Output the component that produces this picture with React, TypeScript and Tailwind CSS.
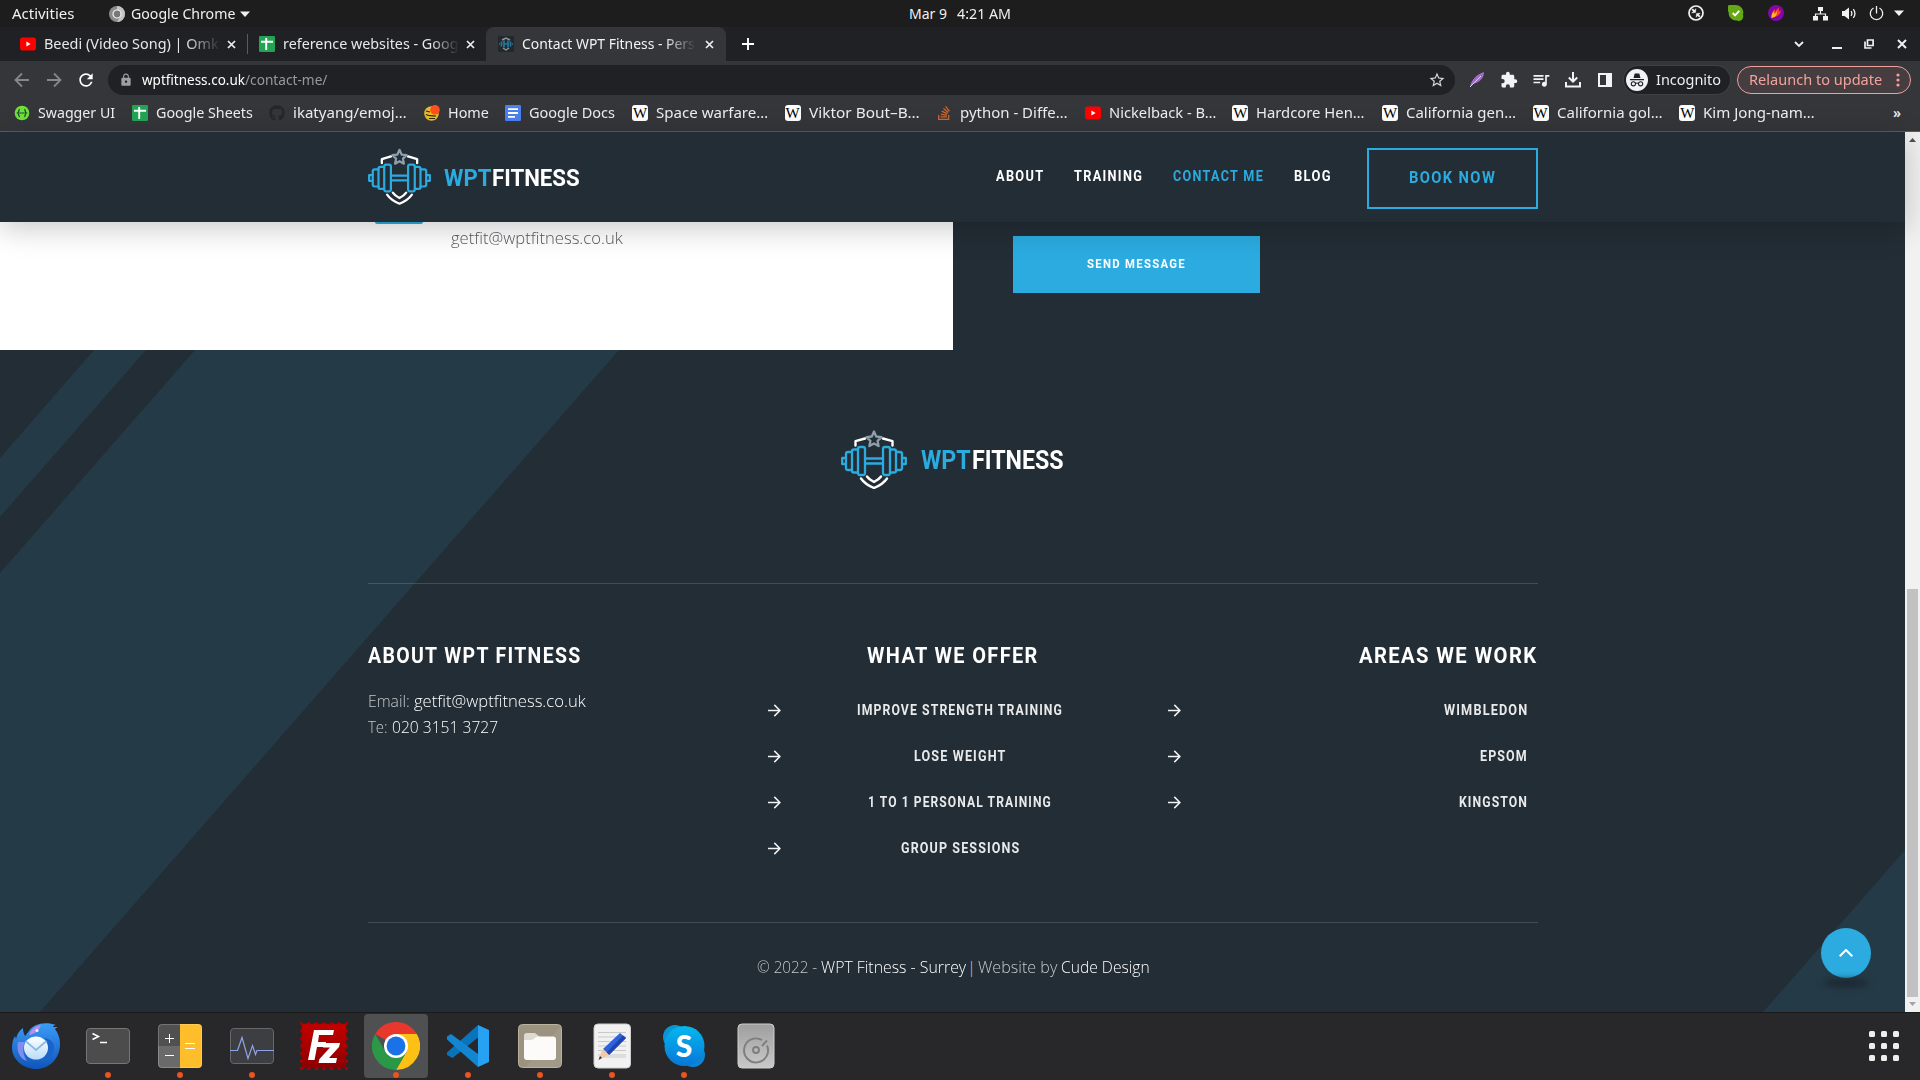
import { useLayoutEffect, useRef, type ReactNode } from "react";
import { FaGithub, FaStackOverflow } from "react-icons/fa";
import { MdStarBorder, MdExtension, MdQueueMusic, MdLock, MdRefresh } from "react-icons/md";

/** Single line of text condensed or widened to fill the width given in its classes. */
function Fit({ className = "", children }: { className?: string; children: ReactNode }) {
  const outer = useRef<HTMLSpanElement>(null);
  const inner = useRef<HTMLSpanElement>(null);
  useLayoutEffect(() => {
    if (!outer.current || !inner.current) return;
    const spacing = parseFloat(getComputedStyle(inner.current).letterSpacing) || 0;
    const natural = inner.current.offsetWidth - spacing;
    inner.current.style.transform = `scaleX(${outer.current.offsetWidth / natural})`;
  }, []);
  return (
    <span ref={outer} className={`inline-block shrink-0 text-left whitespace-nowrap ${className}`}>
      <span ref={inner} className="inline-block origin-left">
        {children}
      </span>
    </span>
  );
}

/* ---------- small favicons ---------- */
const YouTube = () => (
  <svg className="size-4 shrink-0" viewBox="0 0 16 16">
    <rect y="1.5" width="16" height="13" rx="2.8" fill="#f00" />
    <path d="M6.4 5.6v4.8L10.6 8z" fill="#fff" />
  </svg>
);
const Sheets = () => (
  <svg className="size-4 shrink-0" viewBox="0 0 16 16">
    <rect width="16" height="16" rx="1.2" fill="#23a455" />
    <path d="M2 5.7h12M7.2 2v12" stroke="#fff" strokeWidth="1.9" />
  </svg>
);
const Docs = () => (
  <svg className="size-4 shrink-0" viewBox="0 0 16 16">
    <rect width="16" height="16" rx="1.2" fill="#4a80f0" />
    <path d="M3 4.2h10M3 8h10M3 11.8h7" stroke="#fff" strokeWidth="1.8" />
  </svg>
);
const Swagger = () => (
  <svg className="size-4 shrink-0" viewBox="0 0 16 16">
    <circle cx="8" cy="8" r="7.3" fill="#6fe23a" />
    <path d="M5.8 4.3c-1.6 0-.4 2.8-2.2 3.7 1.8.9.6 3.7 2.2 3.7M10.2 4.3c1.6 0 .4 2.8 2.2 3.7-1.8.9-.6 3.7-2.2 3.7" fill="none" stroke="#1d4630" strokeWidth="1.3" />
    <path d="M5.5 8h5" stroke="#1d4630" strokeWidth="1.4" strokeDasharray="1.2 .7" />
  </svg>
);
const HomeFav = () => (
  <svg className="size-4 shrink-0" viewBox="0 0 16 16">
    <circle cx="7.5" cy="8.5" r="7.3" fill="#e9bd25" />
    <path d="M2 6l4 1M2 9.500c3 2 7 1 10 1.500M5 13.500h6" fill="none" stroke="#2b2412" strokeWidth="1.2" />
    <circle cx="11" cy="4.8" r="4.800" fill="#ff5020" />
  </svg>
);
const Wiki = () => (
  <span className="flex size-4 shrink-0 items-center justify-center rounded-[3px] bg-white font-['Liberation_Serif',serif] text-[15px] leading-4 text-black">
    <Fit className="w-[14px]">W</Fit>
  </span>
);
const WptFav = () => (
  <span className="flex size-4 shrink-0 items-center justify-center bg-[#22282c]">
    <svg className="size-4" viewBox="0 0 16 16" fill="none">
      <path d="M4 4l4-2 4 2M5 12l3 2 3-2" stroke="#8d989e" strokeWidth="1.4" />
      <path d="M1 8h1M14 8h1M3.5 5.5v5M12.5 5.5v5M6 4.5v7M10 4.5v7M6 8h4" stroke="#23799e" strokeWidth="1.7" />
    </svg>
  </span>
);

/* ---------- desktop top bar ---------- */
function TopBar() {
  return (
    <div className="grid h-[27px] grid-cols-3 bg-[#1d1d1d] text-[14px] leading-[27px] text-[#f0f0f0]">
      <div className="flex items-center pl-3">
        <Fit className="w-[62px]">Activities</Fit>
        <svg className="ml-[35px] size-4" viewBox="0 0 16 16">
          <circle cx="8" cy="8" r="8" fill="#8c8c8c" />
          <path d="M8 0a8 8 0 0 1 8 8 8 8 0 0 1-8 8l3.5-6L8 4.5z" fill="#c4c4c4" />
          <circle cx="8" cy="8" r="4" fill="#777" stroke="#f2f2f2" strokeWidth="1.2" />
        </svg>
        <Fit className="ml-1.5 w-[104px]">Google Chrome</Fit>
        <svg className="ml-[5px] h-[6px] w-[10px]" viewBox="0 0 10 6"><path d="M0 .5h10L5 6z" fill="#f0f0f0" /></svg>
      </div>
      <div className="flex items-center justify-center gap-[10px]">
        <Fit className="w-[38px]">Mar 9</Fit>
        <Fit className="w-[54px]">4:21 AM</Fit>
      </div>
      <div className="flex items-center justify-end pr-4 pb-px">
        <svg className="size-4" viewBox="0 0 16 16" fill="none" stroke="#f2f2f2">
          <circle cx="8" cy="8" r="7" strokeWidth="1.7" />
          <path d="M4.200 4.200l2.600 2.600M11.800 11.800L9.200 9.200" strokeWidth="1.8" />
          <path d="M3.600 8l4-.4.4-4zM12.400 8l-4 .4-.4 4z" fill="#f2f2f2" strokeWidth=".3" />
        </svg>
        <svg className="ml-6 size-4" viewBox="0 0 16 16">
          <path d="M1 0h7a7.5 7.5 0 0 1 7 9.5c1 3-.5 6.5-4 6.5-1 0-1.5-.3-2-.5A7.5 7.5 0 0 1 .7 7 4.5 4.5 0 0 1 1 0z" fill="#64a813" />
          <path d="M4.700 8l2.300 2.400L11.300 5.800" fill="none" stroke="#fff" strokeWidth="1.900" />
        </svg>
        <svg className="ml-6 size-4" viewBox="0 0 16 16">
          <circle cx="8" cy="8" r="8" fill="#8008a8" />
          <path d="M3.500 13c-.5-4 1-7 3.500-9 0 2 0 2 .5 3 .5-2 2-4 3.500-4.500-.5 2 0 3 .2 4l1.600-1.200c0 5-4 6.500-9.300 7.700z" fill="#fb3b3b" />
          <path d="M3.500 13c0-3 .5-5 2.500-6.500 0 2 .5 2 1 2.500l2-3c0 5-2 6-5.500 7z" fill="#ffc21c" />
        </svg>
        <svg className="ml-[29px] size-[15px]" viewBox="0 0 15 15" fill="#f2f2f2">
          <path d="M5 1h5v4H5zM0 10h5v4.500H0zM10 10h5v4.500h-5z" />
          <path d="M7.500 4v4M2.500 11V8h10v3" fill="none" stroke="#f2f2f2" strokeWidth="1.200" />
        </svg>
        <svg className="ml-[14px] size-[15px]" viewBox="0 0 15 15">
          <path d="M0 5h2.500L7 1.500v12L2.500 10H0z" fill="#f2f2f2" />
          <path d="M9 5.200c1 1.300 1 3.300 0 4.600M11.300 3.200c2 2.600 2 6 0 8.600" fill="none" stroke="#f2f2f2" strokeWidth="1.300" />
        </svg>
        <svg className="ml-3 size-[15px]" viewBox="0 0 15 15" fill="none" stroke="#f2f2f2" strokeWidth="1.300">
          <path d="M4.500 2a6.200 6.200 0 1 0 6 0M7.500 0v7.500" />
        </svg>
        <svg className="ml-[10px] h-[6px] w-[10px]" viewBox="0 0 10 6"><path d="M0 .5h10L5 6z" fill="#f2f2f2" /></svg>
      </div>
    </div>
  );
}

/* ---------- browser chrome ---------- */
const Close = () => (
  <svg className="size-[9px] shrink-0" viewBox="0 0 9 9"><path d="M1 1l7 7M8 1L1 8" stroke="#eee" strokeWidth="1.700" /></svg>
);

function TabStrip() {
  return (
    <div className="flex h-[34px] items-stretch bg-[#202124] text-[14px] leading-[34px] text-[#e6e7e9]">
      <div className="flex w-[247px] items-center pl-5">
        <YouTube />
        <span className="ml-2 w-[177px] whitespace-nowrap [mask-image:linear-gradient(to_right,black_80%,transparent)]">
          <Fit className="w-[175px]">Beedi (Video Song) | Omk</Fit>
        </span>
        <span className="ml-[6px] flex"><Close /></span>
      </div>
      <div className="my-[7px] w-px bg-[#5a5b5f]" />
      <div className="flex w-[238px] items-center pl-[11px]">
        <Sheets />
        <span className="ml-2 w-[176px] whitespace-nowrap [mask-image:linear-gradient(to_right,black_84%,transparent)]">
          <Fit className="w-[175px]">reference websites - Goog</Fit>
        </span>
        <span className="ml-[7px] flex"><Close /></span>
      </div>
      <div className="flex w-[240px] items-center rounded-t-lg bg-[#35363a] pl-3 text-[#f1f2f4]">
        <WptFav />
        <span className="ml-2 w-[174px] whitespace-nowrap [mask-image:linear-gradient(to_right,black_82%,transparent)]">
          <Fit className="w-[173px]">Contact WPT Fitness - Pers</Fit>
        </span>
        <span className="ml-[9px] flex"><Close /></span>
      </div>
      <div className="flex flex-1 items-center rounded-bl-lg pl-4">
        <svg className="size-3" viewBox="0 0 12 12"><path d="M6 0v12M0 6h12" stroke="#fff" strokeWidth="1.900" /></svg>
        <div className="ml-auto flex items-center pr-[13px]">
          <svg className="h-[7px] w-[10px]" viewBox="0 0 10 7"><path d="M1 1l4 4 4-4" fill="none" stroke="#f0f0f0" strokeWidth="1.800" /></svg>
          <svg className="ml-[28px] size-[10px]" viewBox="0 0 10 10"><path d="M0 9h10" stroke="#f0f0f0" strokeWidth="2" /></svg>
          <svg className="ml-[22px] size-[10px]" viewBox="0 0 10 10" fill="none" stroke="#f0f0f0" strokeWidth="1.700"><path d="M3.500 1h5.600v5.500H3.500zM1 2.500V9h6.500" /></svg>
          <svg className="ml-[23px] size-[10px]" viewBox="0 0 10 10"><path d="M1 1l8 8M9 1L1 9" stroke="#f0f0f0" strokeWidth="2" /></svg>
        </div>
      </div>
    </div>
  );
}

function Toolbar() {
  return (
    <div className="flex h-[38px] items-center bg-[#35363a] pl-[14px] text-[14px] leading-[30px]">
      <svg className="size-4" viewBox="0 0 16 16" fill="none" stroke="#85878a" strokeWidth="1.800"><path d="M15 8H2M8 1.500L1.500 8 8 14.500" /></svg>
      <svg className="ml-4 size-4" viewBox="0 0 16 16" fill="none" stroke="#85878a" strokeWidth="1.800"><path d="M1 8h13M8 1.500L14.500 8 8 14.500" /></svg>
      <MdRefresh className="ml-[14px] size-5 text-white" />
      <div className="ml-3 flex h-[30px] w-[1347px] items-center rounded-full bg-[#202124] pl-[11px]">
        <MdLock className="size-[14px] text-[#9aa0a6]" />
        <Fit className="ml-[9px] w-[103px] text-white">wptfitness.co.uk</Fit>
        <Fit className="w-[82px] text-[#96999d]">/contact-me/</Fit>
        <MdStarBorder className="mr-[9px] ml-auto size-[18px] text-[#d5d7da]" />
      </div>
      <svg className="ml-[14px] size-4" viewBox="0 0 16 16"><path d="M1 15C2 8 8 2 15 0c0 6-4 10-11 12z" fill="#a36bd0" /><path d="M1 15L12 4" stroke="#e3c6f5" strokeWidth="1" /></svg>
      <MdExtension className="ml-[15px] size-[18px] text-[#f1f3f4]" />
      <MdQueueMusic className="ml-[13px] size-5 text-[#f1f3f4]" />
      <svg className="ml-[14px] size-4" viewBox="0 0 16 16" fill="none" stroke="#f1f3f4" strokeWidth="2"><path d="M8 0v9M3.800 5.500L8 9.700l4.200-4.200M1 10v4.500h14V10" /></svg>
      <svg className="ml-[17px] h-[14px] w-[14px]" viewBox="0 0 14 14"><path d="M0 0h14v14H0zM2 2v10h6V2z" fill="#f1f3f4" fillRule="evenodd" /></svg>
      <div className="ml-3 flex h-7 w-[106px] items-center rounded-full bg-[#202124] pl-[2px] text-[#eceded] ring-1 ring-[#3f4044]">
        <svg className="size-[22px]" viewBox="0 0 22 22">
          <circle cx="11" cy="11" r="11" fill="#f1f3f4" />
          <path d="M7.500 9l1.200-4.500h4.600L14.500 9zM4 10h14v1.300H4z" fill="#202124" />
          <path d="M5.300 14.800a2.100 2.100 0 1 0 4.200 0 2.100 2.100 0 1 0-4.200 0M12.500 14.800a2.100 2.100 0 1 0 4.200 0 2.100 2.100 0 1 0-4.200 0M9.500 14.500q1.500-1 3 0" fill="none" stroke="#202124" strokeWidth="1.100" />
        </svg>
        <Fit className="ml-2 w-[65px]">Incognito</Fit>
      </div>
      <div className="ml-[7px] flex h-7 w-[174px] items-center rounded-full border border-[#f0a09b] bg-[#463d41] pl-[11px] text-[#f0a39e]">
        <Fit className="w-[133px]">Relaunch to update</Fit>
        <svg className="ml-[14px] h-[14px] w-[4px]" viewBox="0 0 4 14" fill="#f0a39e"><circle cx="2" cy="2" r="1.600" /><circle cx="2" cy="7" r="1.600" /><circle cx="2" cy="12" r="1.600" /></svg>
      </div>
    </div>
  );
}

const bookmarks: { icon: ReactNode; label: string; width: string }[] = [
  { icon: <Swagger />, label: "Swagger UI", width: "w-[77px]" },
  { icon: <Sheets />, label: "Google Sheets", width: "w-[97px]" },
  { icon: <FaGithub className="size-4 text-[#23272c]" />, label: "ikatyang/emoj…", width: "w-[114px]" },
  { icon: <HomeFav />, label: "Home", width: "w-[41px]" },
  { icon: <Docs />, label: "Google Docs", width: "w-[86px]" },
  { icon: <Wiki />, label: "Space warfare…", width: "w-[112px]" },
  { icon: <Wiki />, label: "Viktor Bout–B…", width: "w-[111px]" },
  { icon: <FaStackOverflow className="size-4 text-[#d4672b]" />, label: "python - Diffe…", width: "w-[108px]" },
  { icon: <YouTube />, label: "Nickelback - B…", width: "w-[107px]" },
  { icon: <Wiki />, label: "Hardcore Hen…", width: "w-[109px]" },
  { icon: <Wiki />, label: "California gen…", width: "w-[110px]" },
  { icon: <Wiki />, label: "California gol…", width: "w-[106px]" },
  { icon: <Wiki />, label: "Kim Jong-nam…", width: "w-[112px]" },
];

function BookmarksBar() {
  return (
    <div className="flex h-[33px] items-center gap-[16.600px] border-b border-[#5c5d61] bg-[#35363a] pb-[5px] pl-[14px] text-[14px] leading-7 text-[#eceded]">
      {bookmarks.map((b) => (
        <div key={b.label} className="flex shrink-0 items-center gap-2">
          {b.icon}
          <Fit className={b.width}>{b.label}</Fit>
        </div>
      ))}
      <span className="mr-[19px] ml-auto font-semibold">»</span>
    </div>
  );
}

/* ---------- website ---------- */
function LogoMark({ className }: { className: string }) {
  return (
    <svg className={className} viewBox="0 0 66 59" fill="none" strokeLinejoin="round" strokeLinecap="round">
      <g stroke="#fff" strokeWidth="2.400">
        <path d="M14.500 15.500v-4.300L24 8.500M51.500 15.500v-4.300L42 8.500" />
        <path d="M26 46.500c2 3 4.500 4.300 7 5.500 2.500-1.200 5-2.500 7-5.500M20 48.500c3.500 5 8 7.500 13 9.500 5-2 9.500-4.500 13-9.500" />
      </g>
      <path d="M33 1.500l2.200 5 5.300.6-3.900 3.700 1 5.300L33 13.500l-4.600 2.600 1-5.300-3.900-3.700 5.300-.6z" stroke="#8e9fab" strokeWidth="2.300" />
      <g stroke="#2babe0" strokeWidth="2.300">
        <rect x="17" y="17" width="7" height="28" rx="2" />
        <rect x="42" y="17" width="7" height="28" rx="2" />
        <path d="M17 19.500h-4Q11 19.500 11 21v20q0 1.500 2 1.500h4M49 19.500h4q2 0 2 1.500v20q0 1.500-2 1.500h-4" />
        <path d="M11 22H7q-2 0-2 2v14q0 2 2 2h4M55 22h4q2 0 2 2v14q0 2-2 2h-4" />
        <path d="M5 28H1.200v6H5M61 28h3.800v6H61M24 28.500h18M24 33.500h18" />
      </g>
    </svg>
  );
}

function SiteHeader() {
  return (
    <header className="relative z-10 flex h-[90px] items-center bg-[#232d35] pl-[368px] font-['Roboto',sans-serif] font-bold text-white shadow-[0_6px_30px_rgba(0,0,0,0.22)]">
      <LogoMark className="mb-[2px] h-[57px] w-[63px]" />
      <div className="ml-[13px] flex gap-px pt-[1px] text-[24.500px] leading-8">
        <Fit className="w-[47px] text-[#2babe0]">WPT</Fit>
        <Fit className="w-[88px]">FITNESS</Fit>
      </div>
      <nav className="ml-[416px] flex gap-[31px] text-[14.500px] leading-6 tracking-[1.500px]">
        <Fit className="w-[47px]">ABOUT</Fit>
        <Fit className="w-[68px]">TRAINING</Fit>
        <Fit className="w-[90px] text-[#2babe0]">CONTACT ME</Fit>
        <Fit className="w-[37px]">BLOG</Fit>
      </nav>
      <button className="mt-[2px] ml-9 flex h-[61px] w-[171px] items-center justify-center border-2 border-[#2babe0] pr-[2px] text-[16px] leading-6 tracking-[1.500px] text-[#2babe0]">
        <Fit className="w-[86px]">BOOK NOW</Fit>
      </button>
    </header>
  );
}

function ContactStrip() {
  return (
    <section className="flex h-[128px]">
      <div className="w-[953px] bg-white">
        <div className="flex pl-[375px]">
          <div className="h-[2px] w-12 rounded-b-sm bg-[#2babe0]" />
          <div className="ml-7 pt-[3px] font-['Open_Sans',sans-serif] text-[16.500px] leading-[26px] font-light text-[#555b60]">
            <Fit className="w-[172px]">getfit@wptfitness.co.uk</Fit>
          </div>
        </div>
      </div>
      <div className="flex-1 pt-[14px] pl-[60px]">
        <button className="flex h-[57px] w-[247px] items-center justify-center bg-[#2babe0] pr-[2px] pb-px font-['Roboto',sans-serif] text-[13px] font-bold tracking-[1.500px] text-white">
          <Fit className="w-[98px]">SEND MESSAGE</Fit>
        </button>
      </div>
    </section>
  );
}

const Arrow = () => (
  <svg className="mb-[1px] h-[13px] w-[13px] shrink-0" viewBox="0 0 13 13" fill="none" stroke="#f1f2f3" strokeWidth="1.500"><path d="M0 6.500h12M6.300.9l5.600 5.600-5.600 5.600" /></svg>
);

const offers = [
  { label: "IMPROVE STRENGTH TRAINING", width: "w-[205px]" },
  { label: "LOSE WEIGHT", width: "w-[91px]" },
  { label: "1 TO 1 PERSONAL TRAINING", width: "w-[183px]" },
  { label: "GROUP SESSIONS", width: "w-[118px]" },
];
const areas = [
  { label: "WIMBLEDON", width: "w-[83px]" },
  { label: "EPSOM", width: "w-[47px]" },
  { label: "KINGSTON", width: "w-[68px]" },
];

function Footer() {
  return (
    <footer className="relative h-[662px] bg-[#232d35] text-white">
      <svg className="absolute inset-0 h-full w-full" viewBox="0 0 1905 662" fill="#243a46">
        <path d="M94 0h52L0 167v-59zM195 0h424L40 662H0V223zM1905 500v162h-142z" />
      </svg>
      <div className="relative ml-[368px] w-[1170px]">
        <div className="flex h-[234px] items-center justify-center border-b border-[#ffffff26] pr-px pb-[14px] font-['Roboto',sans-serif] text-[26px] leading-8 font-bold">
          <LogoMark className="h-[59px] w-[66px]" />
          <Fit className="ml-[14px] w-[50px] text-[#2babe0]">WPT</Fit>
          <Fit className="ml-px w-[92px]">FITNESS</Fit>
        </div>
        <div className="grid h-[339px] grid-cols-[400px_369px_370px] border-b border-[#ffffff26] pt-[56px] font-['Roboto',sans-serif] font-bold">
          <div>
            <h3 className="text-[22px] leading-8 tracking-[1.500px]"><Fit className="w-[212px]">ABOUT WPT FITNESS</Fit></h3>
            <div className="mt-[16px] font-['Open_Sans',sans-serif] text-[16.500px] leading-[26px] font-light">
              <div className="flex gap-1"><Fit className="w-[42px] text-[#c3c7ca]">Email:</Fit><Fit className="w-[172px]">getfit@wptfitness.co.uk</Fit></div>
              <div className="flex gap-1"><Fit className="w-[20px] text-[#c3c7ca]">Te:</Fit><Fit className="w-[106px]">020 3151 3727</Fit></div>
            </div>
          </div>
          <div>
            <h3 className="pr-[2px] text-center text-[22px] leading-8 tracking-[1.500px]"><Fit className="w-[170px]">WHAT WE OFFER</Fit></h3>
            <ul className="mt-[16px] text-[14.500px] tracking-[1.300px] text-[#e9eaeb]">
              {offers.map((o) => (
                <li key={o.label} className="flex h-[46px] items-center">
                  <Arrow />
                  <span className="flex-1 pl-px text-center"><Fit className={o.width}>{o.label}</Fit></span>
                </li>
              ))}
            </ul>
          </div>
          <div className="ml-[31px] w-[371px]">
            <h3 className="pr-[3px] text-right text-[22px] leading-8 tracking-[1.500px]"><Fit className="w-[177px]">AREAS WE WORK</Fit></h3>
            <ul className="mt-[16px] text-[14.500px] tracking-[1.300px] text-[#e9eaeb]">
              {areas.map((a) => (
                <li key={a.label} className="flex h-[46px] items-center justify-between pr-3">
                  <Arrow />
                  <Fit className={a.width}>{a.label}</Fit>
                </li>
              ))}
            </ul>
          </div>
        </div>
        <div className="flex justify-center gap-1 pt-[31px] font-['Open_Sans',sans-serif] text-[16.500px] leading-[26px] font-light">
          <Fit className="w-[60px] text-[#c3c7ca]">© 2022 -</Fit>
          <Fit className="w-[145px]">WPT Fitness - Surrey</Fit>
          <span className="flex w-1 justify-center text-[#c3c7ca]">|</span>
          <Fit className="w-[79px] text-[#c3c7ca]">Website by</Fit>
          <Fit className="w-[89px]">Cude Design</Fit>
        </div>
      </div>
      <button className="absolute right-[34px] bottom-[34px] flex size-[50px] items-center justify-center rounded-full bg-[#2babe0]">
        <svg className="h-2 w-[14px]" viewBox="0 0 14 8" fill="none" stroke="#fff" strokeWidth="2"><path d="M.7 7.300L7 1l6.300 6.300" /></svg>
      </button>
      <div className="absolute right-[36px] bottom-[25px] h-[8px] w-[46px] rounded-[50%] bg-[#1c2732] blur-[3px]" />
    </footer>
  );
}

function Scrollbar() {
  return (
    <div className="flex w-[15px] flex-col items-center bg-[#f1f1f1]">
      <svg className="mt-[6px] h-1 w-[7px]" viewBox="0 0 7 4"><path d="M0 4h7L3.500 0z" fill="#505050" /></svg>
      <div className="mt-[447px] h-[408px] w-[11px] bg-[#c1c1c1]" />
      <svg className="mt-[5px] h-1 w-[7px]" viewBox="0 0 7 4"><path d="M0 0h7L3.500 4z" fill="#a3a3a3" /></svg>
    </div>
  );
}

/* ---------- dock ---------- */
const Thunderbird = () => (
  <svg className="size-12" viewBox="0 0 48 48">
    <defs>
      <linearGradient id="tb" x1="0" y1="0" x2="0" y2="1"><stop offset="0" stopColor="#3c9cf7" /><stop offset="1" stopColor="#0f55ba" /></linearGradient>
      <linearGradient id="tm" x1="0" y1="0" x2="0" y2="1"><stop offset="0" stopColor="#fff" /><stop offset="1" stopColor="#b9dcfb" /></linearGradient>
    </defs>
    <path d="M17 9C21 2 33-1 44 3c-2 0-3 1-3 2h5c-1 1-3 1-3 2 4 5 5 11 5 15 0 15-11 25-24 25S0 37 0 26c0-5 1-9 3-12l1 3c1-5 3-8 7-11 0 4 1 6 2 8z" fill="url(#tb)" />
    <path d="M17 13c2-6 6-9 12-10-2 6-6 9-12 10z" fill="#b98cf0" />
    <path d="M6 20c-2 9 2 17 9 19-4-6-5-12-2-19z" fill="#7f8cf0" />
    <path d="M32 16c7 8 5 19-6 22 6 1 14-2 16-11 1-6-4-11-10-11z" fill="#1b63cb" />
    <ellipse cx="24" cy="26" rx="12" ry="11.500" fill="url(#tm)" />
    <path d="M13.500 19L24 28l10.500-9" fill="none" stroke="#8db9e6" strokeWidth="1.800" />
    <circle cx="25" cy="8.500" r="1.500" fill="#e8f4ff" />
  </svg>
);
const Terminal = () => (
  <svg className="size-12" viewBox="0 0 48 48">
    <rect x="2.500" y="6.500" width="43" height="35" rx="3.500" fill="#4c4c4c" stroke="#767676" />
    <path d="M8.500 11.500l6 3-6 3M16 20.500h7" fill="none" stroke="#fff" strokeWidth="1.500" />
  </svg>
);
const Calculator = () => (
  <svg className="size-12" viewBox="0 0 48 48">
    <path d="M24 2H6a4 4 0 0 0-4 4v18h22z" fill="#505050" /><path d="M2 24h22v22H6a4 4 0 0 1-4-4z" fill="#6a6a6a" />
    <path d="M24 2h18a4 4 0 0 1 4 4v36a4 4 0 0 1-4 4H24z" fill="#febd2a" />
    <path d="M13.500 12v9M9 16.500h9M9 33.500h9M29 21.500h10M29 26.500h10" stroke="#fff" strokeWidth="1" />
    <rect x="2.500" y="2.500" width="43" height="43" rx="3.500" fill="none" stroke="#ffffff35" />
  </svg>
);
const Monitor = () => (
  <svg className="size-12" viewBox="0 0 48 48">
    <rect x="2.500" y="6.500" width="43" height="35" rx="3.500" fill="#3d3e42" stroke="#67676a" />
    <path d="M2 28.500h7.500L14 15.500l6 21 4.500-13 3 9 1.500-4h17" fill="none" stroke="#8fa5ea" strokeWidth="1.200" />
  </svg>
);
const FileZilla = () => (
  <svg className="size-12" viewBox="0 0 48 48">
    <defs><linearGradient id="fz" x1="0" y1="0" x2="0" y2="1"><stop offset="0" stopColor="#c40000" /><stop offset="1" stopColor="#8c0000" /></linearGradient></defs>
    <rect x="1.500" y="1.500" width="45" height="45" fill="url(#fz)" />
    <rect x="1.500" y="1.500" width="45" height="45" fill="none" stroke="#b00000" strokeWidth="3" strokeDasharray="0 7.500" strokeLinecap="round" />
    <rect x=".5" y=".5" width="47" height="47" fill="none" stroke="#28282a" strokeWidth="3.400" strokeDasharray="0 7.833" strokeDashoffset="-3.900" strokeLinecap="round" />
    <path d="M14 8h20l-1 5H19l-1 7h8l-1 5h-8l-2.500 13h-6.500z" fill="#fff" />
    <path d="M24 21h16l-1 4-10 11h8l-1 5H18.500l1-4 10.500-11.500h-7z" fill="#fff" />
  </svg>
);
const ChromeIcon = () => (
  <svg className="size-12" viewBox="0 0 48 48">
    <path d="M24 24L3.200 12A24 24 0 0 1 44.800 12z" fill="#e8382d" />
    <path d="M24 12h20.800A24 24 0 0 1 24 48l10.400-18z" fill="#fdc014" />
    <path d="M3.200 12A24 24 0 0 0 24 48l10.400-18L24 24l-10.400 6z" fill="#2b9847" />
    <circle cx="24" cy="24" r="12" fill="#fff" /><circle cx="24" cy="24" r="9.400" fill="#1b72e8" />
  </svg>
);
const VSCode = () => (
  <svg className="size-12" viewBox="0 0 48 48">
    <path d="M34 3v12.500L8.500 36 3 33v-2.500z" fill="#0a74ba" />
    <path d="M3 17.500v-3L7 12l27 20v13z" fill="#1386d2" />
    <path d="M34 3l11 5v32l-11 5z" fill="#27a1f3" />
  </svg>
);
const Files = () => (
  <svg className="size-12" viewBox="0 0 48 48">
    <rect x="2.500" y="2.500" width="43" height="43" rx="4" fill="#9b9380" stroke="#bab29f" />
    <path d="M45 4v37a4 4 0 0 1-4 4H10z" fill="#a9a190" opacity=".5" />
    <path d="M8 14a3 3 0 0 1 3-3h8l5 4v8H8z" fill="#dedad1" />
    <path d="M8 18h7c3 0 4-3.500 7-3.500h15a3 3 0 0 1 3 3V35a3 3 0 0 1-3 3H11a3 3 0 0 1-3-3z" fill="#fcfbf9" />
  </svg>
);
const TextEditor = () => (
  <svg className="size-12" viewBox="0 0 48 48">
    <rect x="6" y="2" width="36.500" height="44" rx="4" fill="#f1f1f1" stroke="#cecece" />
    <path d="M10 10.500h28M10 15h28M10 19.500h28M10 24h28M10 28.500h28M10 33h28M14 35h24" stroke="#c9c9c9" />
    <path d="M32 11l6 5-17 17-6-6z" fill="#2d63dd" /><path d="M35 13.500l3 2.500-17 17-2.500-2.500z" fill="#1d45b0" />
    <path d="M15 27l6 6-8 3.500-2-1.500z" fill="#f3c9a1" /><path d="M12 34l2 2-3.500 2z" fill="#333" />
  </svg>
);
const Skype = () => (
  <svg className="size-12" viewBox="0 0 48 48">
    <defs><linearGradient id="sk" x1="0" y1="0" x2="0" y2="1"><stop offset="0" stopColor="#06b8ef" /><stop offset="1" stopColor="#0876d8" /></linearGradient></defs>
    <circle cx="15" cy="15" r="12" fill="#0a96d4" /><circle cx="33" cy="33" r="12" fill="#0b86d6" />
    <circle cx="24.500" cy="24" r="20" fill="url(#sk)" />
    <text x="24" y="34.500" textAnchor="middle" fontFamily="Lato, sans-serif" fontWeight="900" fontSize="30" fill="#fff">S</text>
  </svg>
);
const Disk = () => (
  <svg className="size-12" viewBox="0 0 48 48">
    <defs><linearGradient id="dk" x1="0" y1="0" x2="0" y2="1"><stop offset="0" stopColor="#9e9e9e" /><stop offset="1" stopColor="#c9c9c9" /></linearGradient></defs>
    <rect x="6" y="2" width="36" height="44" rx="4" fill="url(#dk)" stroke="#cfcfcf" />
    <path d="M30 18a12 12 0 1 0 5 5.500M30 24l5-5.500" fill="none" stroke="#7e7e7e" strokeWidth="1.900" />
    <circle cx="24" cy="28" r="3" fill="none" stroke="#7e7e7e" strokeWidth="1.900" />
  </svg>
);

const apps: { name: string; icon: ReactNode; running: boolean; active?: boolean }[] = [
  { name: "thunderbird", icon: <Thunderbird />, running: false },
  { name: "terminal", icon: <Terminal />, running: true },
  { name: "calculator", icon: <Calculator />, running: true },
  { name: "monitor", icon: <Monitor />, running: true },
  { name: "filezilla", icon: <FileZilla />, running: false },
  { name: "chrome", icon: <ChromeIcon />, running: true, active: true },
  { name: "vscode", icon: <VSCode />, running: true },
  { name: "files", icon: <Files />, running: true },
  { name: "editor", icon: <TextEditor />, running: true },
  { name: "skype", icon: <Skype />, running: true },
  { name: "disk", icon: <Disk />, running: false },
];

function Dock() {
  return (
    <div className="flex h-[68px] items-center gap-2 border-t border-[#1a1a1a] bg-[#28282a] pb-px pl-1">
      {apps.map((a) => (
        <div key={a.name} className={`flex h-16 w-16 flex-col items-center rounded ${a.active ? "bg-[#4f5052]" : ""}`}>
          <div className="mt-2">{a.icon}</div>
          {a.running && <div className="mt-[2px] size-[6px] rounded-full bg-[#e95420]" />}
        </div>
      ))}
      <div className="mr-[21px] ml-auto grid grid-cols-3 gap-[6px]">
        {Array.from({ length: 9 }, (_, i) => (
          <div key={i} className="size-[6px] rounded-[1.500px] bg-[#eeeeec]" />
        ))}
      </div>
    </div>
  );
}

export default function App() {
  return (
    <div className="flex h-[1080px] w-[1920px] flex-col overflow-hidden bg-[#232d35] font-['Noto_Sans',sans-serif]">
      <TopBar />
      <TabStrip />
      <Toolbar />
      <BookmarksBar />
      <div className="flex h-[880px]">
        <main className="w-[1905px]">
          <SiteHeader />
          <ContactStrip />
          <Footer />
        </main>
        <Scrollbar />
      </div>
      <Dock />
    </div>
  );
}
